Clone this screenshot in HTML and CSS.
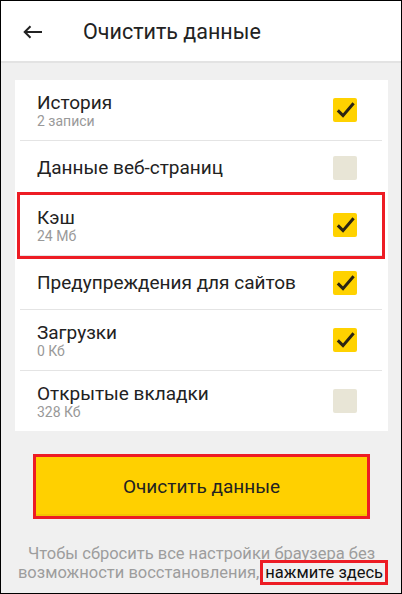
FILE: index.html
```html
<!DOCTYPE html>
<html lang="ru">
<head>
    <meta charset="UTF-8">
    <meta name="viewport" content="width=device-width, initial-scale=1.0">
    <title>Очистить данные</title>
    <link rel="stylesheet" href="styles.css">
</head>
<body>

    <div class="screen">
        <header class="topbar">
            <button class="back-btn" aria-label="Назад">
                <svg width="20" height="14" viewBox="0 0 20 14">
                    <path d="M19 7H2M7.5 1.2L1.7 7l5.8 5.8" fill="none" stroke="#222" stroke-width="2"/>
                </svg>
            </button>
            <h1 class="title">Очистить данные</h1>
        </header>

        <main class="content">
            <ul class="options">
                <li class="option tall">
                    <div class="option-text">
                        <span class="option-title">История</span>
                        <span class="option-meta">2 записи</span>
                    </div>
                    <span class="check on"></span>
                </li>
                <li class="option">
                    <div class="option-text">
                        <span class="option-title">Данные веб-страниц</span>
                    </div>
                    <span class="check"></span>
                </li>
                <li class="option tall marked">
                    <div class="option-text">
                        <span class="option-title">Кэш</span>
                        <span class="option-meta">24 Мб</span>
                    </div>
                    <span class="check on"></span>
                </li>
                <li class="option">
                    <div class="option-text">
                        <span class="option-title">Предупреждения для сайтов</span>
                    </div>
                    <span class="check on"></span>
                </li>
                <li class="option tall">
                    <div class="option-text">
                        <span class="option-title">Загрузки</span>
                        <span class="option-meta">0 Кб</span>
                    </div>
                    <span class="check on"></span>
                </li>
                <li class="option tall">
                    <div class="option-text">
                        <span class="option-title">Открытые вкладки</span>
                        <span class="option-meta">328 Кб</span>
                    </div>
                    <span class="check"></span>
                </li>
            </ul>

            <button class="clear-btn marked">Очистить данные</button>

            <p class="note">
                Чтобы сбросить все настройки браузера без возможности восстановления,
                <a class="reset-link marked">нажмите здесь</a>
            </p>
        </main>
    </div>

    <script>
        // галочки в чекбоксах
        var tick = '<svg width="24" height="24" viewBox="0 0 24 24">' +
            '<path d="M4.8 12.4l5.2 5.2 10.6-12.4" fill="none" stroke="#2b2413" stroke-width="3"/></svg>';

        document.querySelectorAll('.check').forEach(function (box) {
            if (box.classList.contains('on')) {
                box.innerHTML = tick;
            }
            box.onclick = function () {
                box.classList.toggle('on');
                box.innerHTML = box.classList.contains('on') ? tick : '';
            };
        });
    </script>

</body>
</html>
```

FILE: styles.css
```css
body {
    margin: 0;
    padding: 0;
    font-family: Roboto, 'Noto Sans', sans-serif;
    color: #222;
}

.screen {
    width: 402px;
    height: 594px;
    box-sizing: border-box;
    border: 1px solid #000;
    background-color: #f0f0f0;
    overflow: hidden;
}

.topbar {
    height: 60px;
    display: flex;
    align-items: center;
    background-color: #fff;
    border-bottom: 2px solid #e3e3e3;
}

.back-btn {
    width: 20px;
    height: 14px;
    padding: 0;
    margin: 1px 0 0 22px;
    border: none;
    background: none;
    display: flex;
    cursor: pointer;
}

.title {
    margin: 0 0 0 40px;
    font-size: 21.5px;
    font-weight: 400;
    color: #222;
}

.content {
    padding: 17px 13px 0 14px;
}

.options {
    list-style: none;
    margin: 0;
    padding: 0 6px 0 5px;
    background-color: #fff;
}

.option {
    height: 53px;
    display: flex;
    align-items: center;
    justify-content: space-between;
    padding: 0 25px 0 17px;
    border-bottom: 1px solid #e4e4e4;
}

.option:last-child {
    border-bottom: none;
}

.option.tall {
    height: 60px;
}

.option.tall .option-text {
    padding-top: 3px;
}

.option-text {
    display: flex;
    flex-direction: column;
}

.option-title {
    font-size: 19px;
    line-height: 20px;
    color: #222;
}

.option-meta {
    font-size: 14px;
    line-height: 17px;
    color: #999;
}

.check {
    width: 24px;
    height: 24px;
    border-radius: 2px;
    background-color: #e8e5d6;
    cursor: pointer;
}

.check.on {
    background-color: #ffd200;
}

.check svg {
    display: block;
}

.clear-btn {
    display: block;
    width: 331px;
    height: 59px;
    margin: 26px 0 0 21px;
    border: none;
    background-color: #ffd000;
    box-shadow: inset 0 -2px 0 #f2c400;
    font-family: inherit;
    font-size: 19px;
    color: #222;
    cursor: pointer;
}

.note {
    margin: 28px 0 0;
    font-size: 16.5px;
    line-height: 19px;
    text-align: center;
    color: #9d9d9d;
}

.reset-link {
    color: #111;
    padding: 0 2px;
    white-space: nowrap;
    cursor: pointer;
}

/* красные рамки */
.marked {
    outline: 3px solid #ed1c24;
}
```
